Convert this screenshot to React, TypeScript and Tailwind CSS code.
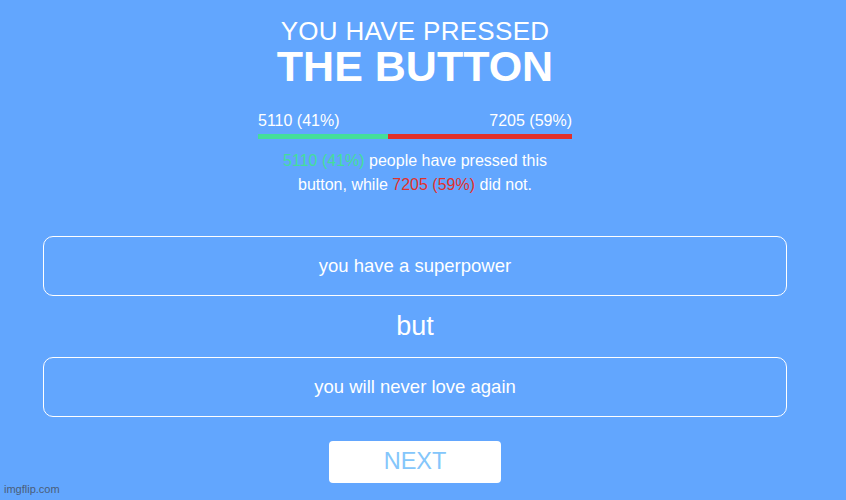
const pressed = 5110
const notPressed = 7205
const total = pressed + notPressed
const pct = (n: number) => Math.round((n / total) * 100)

function Choice({ text }: { text: string }) {
  return (
    <div className="flex h-[60px] items-center justify-center rounded-[10px] border border-white text-[18.5px] text-white">
      {text}
    </div>
  )
}

export default function App() {
  const greenWidth = (pressed / total) * 100

  return (
    <div
      className="relative h-[500px] w-[846px] overflow-hidden bg-[#62a6fe]"
      style={{ fontFamily: '"Liberation Sans", Arial, sans-serif' }}
    >
      <div className="ml-[43px] flex w-[744px] flex-col items-center">
        {/* Header */}
        <h2 className="mt-[17px] text-[26px] font-light leading-[29px] tracking-[0.3px] text-white">
          YOU HAVE PRESSED
        </h2>
        <h1 className="text-[43px] font-bold leading-[40px] text-white">THE BUTTON</h1>

        {/* Stats bar */}
        <div className="mt-[26px] w-[314px]">
          <div className="flex justify-between text-[16px] leading-[18px] text-white">
            <span>
              {pressed} ({pct(pressed)}%)
            </span>
            <span>
              {notPressed} ({pct(notPressed)}%)
            </span>
          </div>
          <div className="mt-[4px] flex h-[5px] w-full">
            <div className="h-full bg-[#44de9a]" style={{ width: `${greenWidth}%` }} />
            <div className="h-full flex-1 bg-[#e2312b]" />
          </div>
        </div>

        <div className="mt-[10px] flex flex-col items-center text-[16px] leading-[24px] text-white">
          <p>
            <span className="text-[#44de9a]">
              {pressed} ({pct(pressed)}%)
            </span>{' '}
            people have pressed this
          </p>
          <p>
            button, while{' '}
            <span className="text-[#e2312b]">
              {notPressed} ({pct(notPressed)}%)
            </span>{' '}
            did not.
          </p>
        </div>

        {/* Dilemma */}
        <div className="mt-[39px] flex w-full flex-col">
          <Choice text="you have a superpower" />
          <div className="flex h-[61px] items-center justify-center pb-[1px] text-[27px] font-light text-white">
            but
          </div>
          <Choice text="you will never love again" />
        </div>

        <button className="mt-[24px] h-[42px] w-[172px] rounded-[4px] bg-white text-[23.5px] leading-none text-[#84c6fb]">
          NEXT
        </button>
      </div>

      <span className="absolute bottom-[3px] left-[4px] text-[11px] text-[#4a5d78]">
        imgflip.com
      </span>
    </div>
  )
}
